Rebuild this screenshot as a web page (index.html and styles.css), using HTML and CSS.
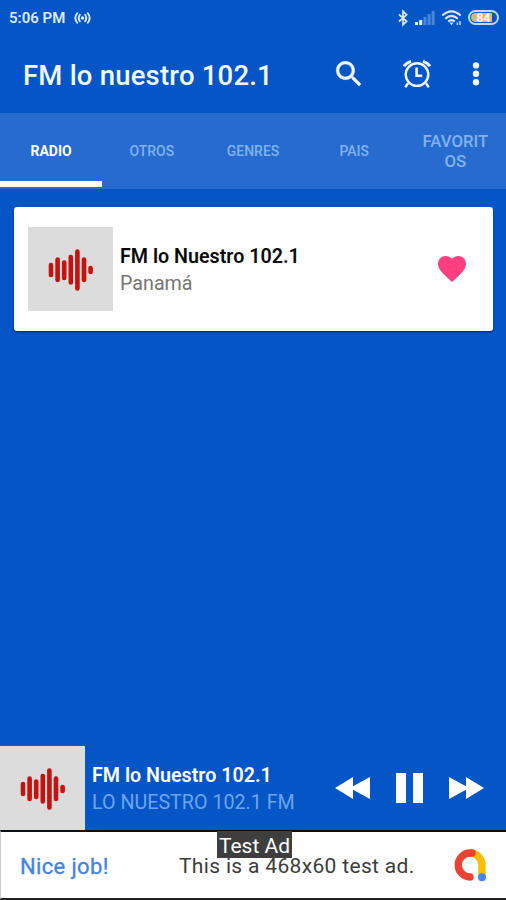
FILE: index.html
```html
<!DOCTYPE html>
<html lang="es">
<head>
    <meta charset="UTF-8">
    <meta name="viewport" content="width=device-width, initial-scale=1.0">
    <title>FM lo nuestro 102.1</title>
    <link rel="stylesheet" href="styles.css">
</head>
<body>
    <div class="app">
        <div class="status-bar">
            <span class="hora">5:06 PM</span>
            <svg class="icon-cast" width="17" height="14" viewBox="0 0 18 14" fill="none" stroke="#dcebff" stroke-width="2" stroke-linecap="round">
                <circle cx="9" cy="7" r="1.8" fill="#dcebff" stroke="none"/>
                <path d="M6.2 3.6Q3.8 7 6.2 10.4M11.8 3.6Q14.2 7 11.8 10.4M3.4 2Q-0.6 7 3.4 12M14.6 2Q18.6 7 14.6 12"/>
            </svg>
            <div class="status-icons">
                <svg width="12" height="18" viewBox="0 0 12 18" fill="none" stroke="#dcebff" stroke-width="1.7">
                    <path d="M2 5.5L9.6 12.2L6 15.8V2.2L9.6 5.8L2 12.5"/>
                </svg>
                <svg class="icon-signal" width="20" height="16" viewBox="0 0 20 16">
                    <path fill="#e6f1ff" d="M0 12h3v3H0zM4.2 10h3v5h-3z"/>
                    <path fill="#4a87dc" d="M8.4 7h3v8h-3zM12.6 4h3v11h-3zM16.6 1h3v14h-3z"/>
                </svg>
                <svg class="icon-wifi" width="22" height="18" viewBox="0 0 22 18" fill="none" stroke="#dcebff" stroke-width="2">
                    <path d="M1.2 6.6Q10.5 -1.8 19.8 6.6M4.2 9.8Q10.5 4 16.8 9.8M7.2 12.6Q10.5 9.6 13.8 12.6"/>
                    <path d="M8.4 13.6h4.2l-2.1 2.6z" fill="#dcebff" stroke="none"/>
                    <path d="M16.4 13.500v2.500M19 12v4" stroke="#b5d0f5" stroke-width="1.6"/>
                </svg>
                <span class="bateria"><span class="carga">84</span></span>
            </div>
        </div>

        <header class="toolbar">
            <h1>FM lo nuestro 102.1</h1>
            <div class="toolbar-icons">
                <svg width="34" height="34" viewBox="0 0 24 24" fill="#f2f8ff" stroke="#f2f8ff" stroke-width="0.3">
                    <path d="M15.5 14h-.79l-.28-.27C15.41 12.59 16 11.11 16 9.5 16 5.91 13.09 3 9.5 3S3 5.91 3 9.5 5.91 16 9.5 16c1.61 0 3.09-.59 4.23-1.57l.27.28v.79l5 4.99L20.49 19l-4.99-5zm-6 0C7.01 14 5 11.99 5 9.5S7.01 5 9.5 5 14 7.01 14 9.5 11.99 14 9.5 14z"/>
                </svg>
                <svg width="34" height="34" viewBox="0 0 34 34" fill="none" stroke="#f2f8ff" stroke-width="2.4">
                    <circle cx="17" cy="17.6" r="11.3"/>
                    <path d="M16.6 10.6v8.2h5.6" stroke-width="2.6"/>
                    <path d="M8 26.2l-2.8 4M26 26.2l2.8 4"/>
                    <path d="M4 9.2Q6.2 5.8 11 4.4M30 9.2Q27.8 5.8 23 4.4" stroke-width="3"/>
                </svg>
                <svg class="icon-menu" width="8" height="34" viewBox="0 0 8 34" fill="#f2f8ff">
                    <circle cx="4" cy="8.4" r="3.2"/>
                    <circle cx="4" cy="16.8" r="3.2"/>
                    <circle cx="4" cy="25.2" r="3.2"/>
                </svg>
            </div>
        </header>

        <nav class="tabs">
            <div class="tab activo">RADIO</div>
            <div class="tab">OTROS</div>
            <div class="tab">GENRES</div>
            <div class="tab">PAIS</div>
            <div class="tab grande">FAVORIT<br>OS</div>
        </nav>

        <main class="lista">
            <div class="card">
                <div class="logo">
                    <svg width="46" height="44" viewBox="0 0 46 44" fill="none" stroke="#c4120f" stroke-width="4.6" stroke-linecap="round">
                        <path d="M3 18v10M9.6 12.500v20.500M16.2 15.500v15.500M22.8 10v25.500M29.4 4.500v37M36 12.500v20.500M42.6 21v4"/>
                    </svg>
                </div>
                <div class="info">
                    <h2>FM lo Nuestro 102.1</h2>
                    <p>Panamá</p>
                </div>
                <svg class="corazon" width="28" height="26" viewBox="2 3 20 18.35" preserveAspectRatio="none" fill="#ff3f80">
                    <path d="M12 21.350l-1.450-1.320C5.400 15.360 2 12.280 2 8.500 2 5.420 4.420 3 7.500 3c1.740 0 3.410.81 4.500 2.090C13.090 3.810 14.760 3 16.500 3 19.580 3 22 5.420 22 8.500c0 3.780-3.400 6.860-8.550 11.540L12 21.350z"/>
                </svg>
            </div>
        </main>

        <div class="player">
            <div class="logo">
                <svg width="46" height="44" viewBox="0 0 46 44" fill="none" stroke="#c4120f" stroke-width="4.6" stroke-linecap="round">
                    <path d="M3 18v10M9.6 12.500v20.500M16.2 15.500v15.500M22.8 10v25.500M29.4 4.500v37M36 12.500v20.500M42.6 21v4"/>
                </svg>
            </div>
            <div class="info">
                <h2>FM lo Nuestro 102.1</h2>
                <p>LO NUESTRO 102.1 FM</p>
            </div>
            <div class="controles">
                <svg width="35" height="22" viewBox="0 0 35 22" fill="#fff">
                    <path d="M0 11L18 0v9.200L35 0v22l-17-9.200V22z"/>
                </svg>
                <svg width="27" height="30" viewBox="0 0 27 30" fill="#fff">
                    <path d="M0 0h10v30H0zM17 0h10v30H17z"/>
                </svg>
                <svg width="35" height="22" viewBox="0 0 35 22" fill="#fff">
                    <path d="M35 11L17 0v9.200L0 0v22l17-9.200V22z"/>
                </svg>
            </div>
        </div>

        <div class="anuncio">
            <span class="nice">Nice job!</span>
            <span class="texto">This is a 468x60 test ad.</span>
            <svg class="admob" width="34" height="34" viewBox="0 0 34 34" fill="none" stroke-width="7.4">
                <path d="M17 5A12 12 0 0 1 29 17V28" stroke="#fbbc04"/>
                <path d="M19 5H17.500A12 12 0 1 0 17 29" stroke="#ea4335" stroke-linecap="round"/>
                <circle cx="29" cy="29.200" r="4" fill="#4285f4"/>
            </svg>
            <span class="etiqueta">Test Ad</span>
        </div>
    </div>
</body>
</html>
```
FILE: styles.css
```css
* {
    box-sizing: border-box;
}
body {
    font-family: Roboto, Arial, sans-serif;
    background-color: #0455c6;
    margin: 0;
    padding: 0;
}
h1, h2, p {
    margin: 0;
    font-weight: 400;
    white-space: nowrap;
}
svg {
    display: block;
    flex-shrink: 0;
}
.app {
    width: 506px;
    height: 900px;
    display: flex;
    flex-direction: column;
    overflow: hidden;
}
.status-bar {
    height: 35px;
    padding: 0 7px 0 9px;
    display: flex;
    align-items: center;
    color: #dcebff;
}
.hora {
    font-size: 15px;
    font-weight: 600;
    width: 65px;
}
.status-icons {
    margin-left: auto;
    display: flex;
    align-items: center;
}
.icon-signal {
    margin-left: 6px;
}
.icon-wifi {
    margin-left: 6px;
}
.bateria {
    margin-left: 5px;
    width: 31px;
    height: 15px;
    padding: 1px;
    border: 2px solid #c3d9f7;
    border-radius: 8px;
}
.carga {
    display: block;
    height: 9px;
    border-radius: 5px;
    background: linear-gradient(to right, #e9b566 84%, #0455c6 84%);
    color: #fff;
    font-size: 12px;
    font-weight: 700;
    line-height: 10px;
    text-align: center;
}
.toolbar {
    height: 78px;
    padding: 0 26px 0 23px;
    display: flex;
    align-items: center;
    justify-content: space-between;
}
.toolbar h1 {
    font-size: 27.5px;
    font-weight: 500;
    letter-spacing: 0.2px;
    color: #f2f8ff;
    padding-top: 2px;
}
.toolbar-icons {
    display: flex;
    gap: 34px;
}
.icon-menu {
    margin-left: 4px;
}
.tabs {
    height: 76px;
    display: grid;
    grid-template-columns: repeat(5, 1fr);
    background-color: #266bcd;
}
.tab {
    display: flex;
    align-items: center;
    justify-content: center;
    text-align: center;
    font-size: 14px;
    font-weight: 500;
    color: #82b2f0;
    padding-bottom: 1px;
}
.tab.activo {
    color: #fff;
    font-weight: 700;
    border-bottom: 6px solid #fff;
    margin: 0 -1px 2px 0;
    padding: 8px 0 0;
}
.tab.grande {
    font-size: 16.8px;
    line-height: 20px;
}
.lista {
    flex: 1;
    padding: 18px 13px 0 14px;
}
.card {
    height: 124px;
    padding: 0 27px 0 14px;
    display: flex;
    align-items: center;
    background-color: #fff;
    border-radius: 3px;
    box-shadow: 0 1px 2px rgba(0, 0, 60, 0.6);
}
.logo {
    width: 85px;
    height: 84px;
    background-color: #dcdcdc;
    display: flex;
    align-items: center;
    justify-content: center;
    flex-shrink: 0;
}
.info {
    margin-left: 7px;
    padding-top: 2px;
}
.info h2 {
    font-size: 19.7px;
    font-weight: 600;
    line-height: 26px;
}
.info p {
    font-size: 19.7px;
    line-height: 27px;
}
.card .info h2 {
    color: #0a0a0a;
}
.card .info p {
    color: #757575;
}
.corazon {
    margin-left: auto;
}
.player {
    height: 84px;
    display: flex;
    align-items: center;
    padding-right: 22px;
}
.player .info h2 {
    color: #fff;
}
.player .info p {
    color: #6ea5ee;
}
.controles {
    margin-left: auto;
    display: flex;
    align-items: center;
    gap: 26px;
}
.anuncio {
    position: relative;
    height: 70px;
    display: flex;
    align-items: center;
    padding: 0 19px 0 19px;
    background-color: #fff;
    border-top: 2px solid #0a0f18;
    border-bottom: 2px solid #222;
    border-left: 1px solid #ccc;
}
.nice {
    width: 159px;
    font-size: 22px;
    letter-spacing: 0.35px;
    color: #3f83e8;
    -webkit-text-stroke: 0.3px #3f83e8;
    padding-top: 2px;
}
.texto {
    font-size: 21px;
    letter-spacing: 0.33px;
    color: #3c3c3c;
    white-space: nowrap;
    padding-top: 2px;
}
/* va encima del texto del anuncio */
.etiqueta {
    position: absolute;
    left: 216px;
    top: -1px;
    width: 75px;
    height: 27px;
    background-color: #3e3e3e;
    color: #fff;
    font-size: 21px;
    line-height: 30px;
    text-align: center;
    white-space: nowrap;
}
.admob {
    margin-left: auto;
}
```
